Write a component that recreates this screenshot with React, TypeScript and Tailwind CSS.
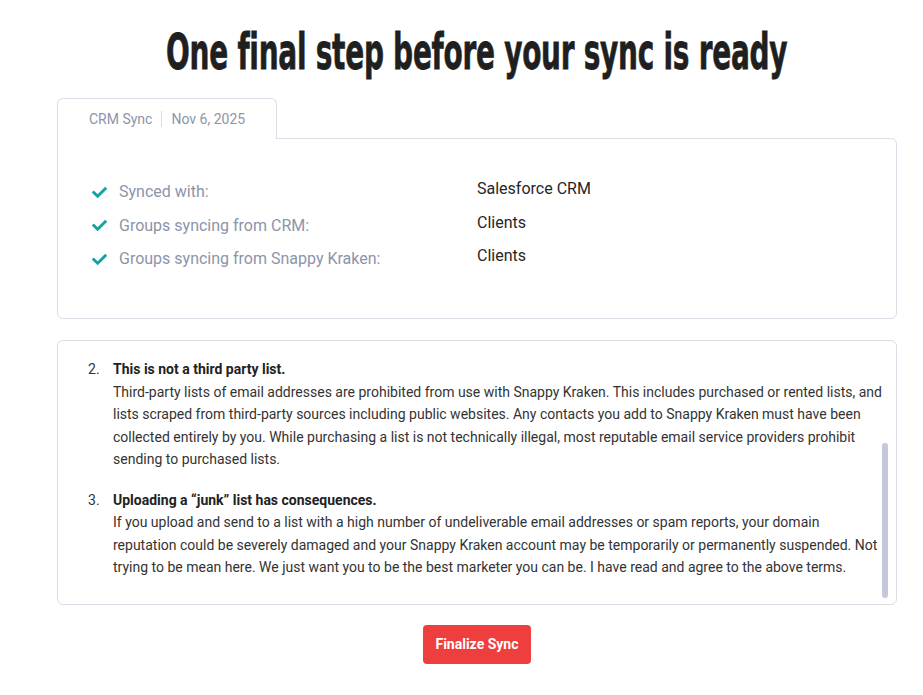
import { useState } from 'react';

const rows = [
  { label: 'Synced with:', value: 'Salesforce CRM' },
  { label: 'Groups syncing from CRM:', value: 'Clients' },
  { label: 'Groups syncing from Snappy Kraken:', value: 'Clients' },
];

const terms = [
  {
    n: 2,
    title: 'This is not a third party list.',
    body:
      'Third-party lists of email addresses are prohibited from use with Snappy Kraken. This includes purchased or rented lists, and lists scraped from third-party sources including public websites. Any contacts you add to Snappy Kraken must have been collected entirely by you. While purchasing a list is not technically illegal, most reputable email service providers prohibit sending to purchased lists.',
  },
  {
    n: 3,
    title: 'Uploading a \u201cjunk\u201d list has consequences.',
    body:
      'If you upload and send to a list with a high number of undeliverable email addresses or spam reports, your domain reputation could be severely damaged and your Snappy Kraken account may be temporarily or permanently suspended. Not trying to be mean here. We just want you to be the best marketer you can be. I have read and agree to the above terms.',
  },
];

function Check() {
  return (
    <svg viewBox="0 0 512 512" className="w-[19px] h-[15px] text-[#17a2a2]" fill="currentColor">
      <path d="M173.9 439.4l-166.4-166.4c-10-10-10-26.2 0-36.2l36.2-36.2c10-10 26.2-10 36.2 0L192 312.7 432.1 72.6c10-10 26.2-10 36.2 0l36.2 36.2c10 10 10 26.2 0 36.2l-294.4 294.4c-10 10-26.2 10-36.2 0z" />
    </svg>
  );
}

export default function App() {
  const [synced, setSynced] = useState(false);

  return (
    <div className="min-h-[695px] bg-white font-['Roboto',sans-serif]">
      <div className="ml-[57px] w-[840px] flex flex-col">
        {/* Title */}
        <div className="pt-[26px] h-[78px] flex justify-center">
          <h1 className="whitespace-nowrap text-[50px] leading-[52px] font-bold text-[#1f1f1f] tracking-[-0.5px] font-['DejaVu_Sans',sans-serif] scale-x-[0.56] origin-center [-webkit-text-stroke:0.8px_#1f1f1f]">
            One final step before your sync is ready
          </h1>
        </div>

        {/* Tab */}
        <div className="mt-[19px] flex">
          <div className="w-[220px] h-[41px] border border-b-0 border-[#dcdde7] rounded-t-[6px] flex items-center pl-[31px] text-[14px] text-[#8d95a8] bg-white relative top-[1px]">
            <span>CRM Sync</span>
            <span className="mx-[9px] h-[16px] w-px bg-[#dcdde7]" />
            <span>Nov 6, 2025</span>
          </div>
        </div>

        {/* Summary card */}
        <div className="h-[181px] border border-[#dcdde7] rounded-b-[6px] rounded-tr-[6px] pt-[40px] pl-[32px]">
          <div className="flex flex-col gap-[11px]">
            {rows.map((r) => (
              <div key={r.label} className="grid grid-cols-[387px_1fr] items-start h-[22.5px]">
                <div className="flex items-center gap-[10px] pt-[2px]">
                  <Check />
                  <span className="text-[16px] leading-[22px] text-[#8c94aa]">{r.label}</span>
                </div>
                <span className="text-[16px] leading-[20px] text-[#262626]">{r.value}</span>
              </div>
            ))}
          </div>
        </div>

        {/* Terms card */}
        <div className="mt-[21px] h-[265px] border border-[#dcdde7] rounded-[6px] relative overflow-hidden">
          <div className="pt-[17px] pl-[30px] flex flex-col gap-[18px]">
            {terms.map((t) => (
              <div key={t.n} className="flex text-[14px] leading-[22.5px] text-[#333]">
                <span className="w-[25px] shrink-0">{t.n}.</span>
                <div className="w-[772px]">
                  <p className="font-bold text-[#222]">{t.title}</p>
                  <p>{t.body}</p>
                </div>
              </div>
            ))}
          </div>
          <div className="absolute right-[8px] top-[102px] w-[6px] h-[155px] rounded-full bg-[#c3c9da]" />
        </div>

        {/* Button */}
        <div className="mt-[20px] flex justify-center">
          <button
            onClick={() => setSynced(!synced)}
            className="h-[39px] px-[12px] rounded-[4px] bg-[#ef3e3e] text-white text-[14px] font-bold font-['Roboto',sans-serif]"
          >
            Finalize Sync
          </button>
        </div>
      </div>
    </div>
  );
}
